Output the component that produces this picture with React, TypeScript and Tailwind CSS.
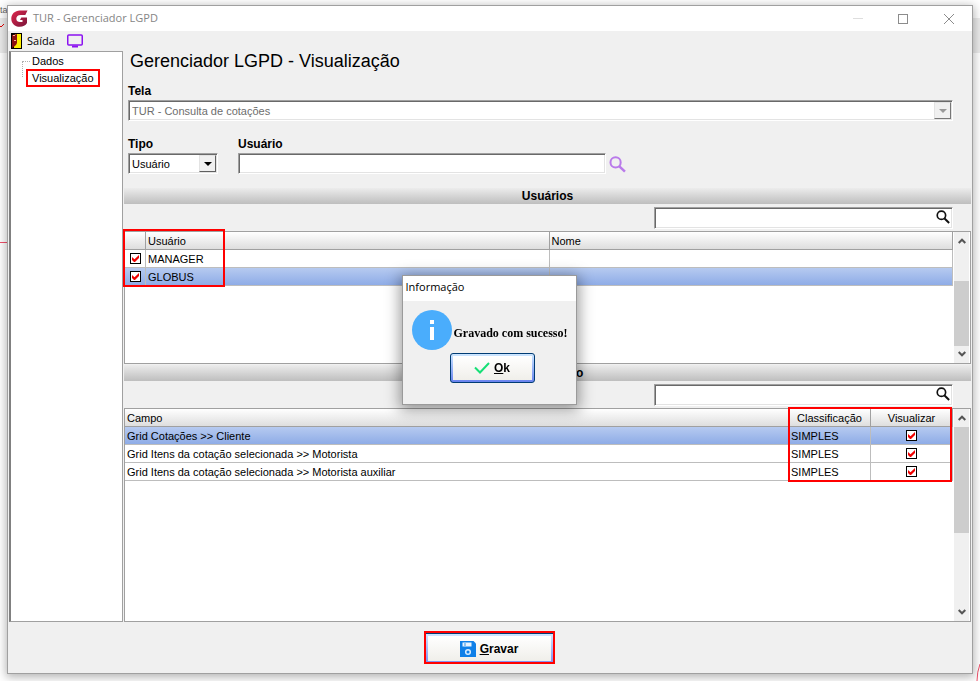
import { useState } from "react";
import type { ReactNode } from "react";

const sunken =
  "border border-t-[#a0a0a0] border-l-[#a0a0a0] border-b-white border-r-white bg-white shadow-[inset_1px_1px_0_#696969,inset_-1px_-1px_0_#e3e3e3]";

function RedCheck({ label }: { label: string }) {
  const [on, setOn] = useState(true);
  return (
    <span className="relative inline-grid size-[11px] align-middle">
      <input
        type="checkbox"
        aria-label={label}
        checked={on}
        onChange={() => setOn(!on)}
        className="col-start-1 row-start-1 size-[11px] appearance-none border border-black bg-white"
      />
      {on && (
        <svg viewBox="0 0 11 11" className="pointer-events-none col-start-1 row-start-1 size-[11px]">
          <path d="M2 4v3l2 2h1l4-4V2L4.500 6.200z" fill="#f00000" />
        </svg>
      )}
    </span>
  );
}

function Magnifier({ color, className }: { color: string; className: string }) {
  return (
    <svg viewBox="0 0 16 16" className={className} fill="none" stroke={color}>
      <circle cx="6.200" cy="6" r="4.800" strokeWidth="1.900" />
      <path d="M9.500 9.500l5.500 5.300" strokeWidth="2.300" />
    </svg>
  );
}

function Band({ children }: { children: ReactNode }) {
  return (
    <h2 className="h-4 bg-linear-to-b from-[#ececec] to-[#bebebe] text-center text-xs leading-4 font-bold">
      {children}
    </h2>
  );
}

function SearchBox({ label }: { label: string }) {
  return (
    <div className={`${sunken} mr-[18px] ml-auto flex h-[22px] w-[299px] items-center`}>
      <input aria-label={label} className="h-full min-w-0 flex-1 px-1 outline-none" />
      <button aria-label={`Pesquisar ${label}`} className="mr-[2px] mb-[2px]">
        <Magnifier color="#111" className="size-[14px]" />
      </button>
    </div>
  );
}

function ScrollBar({ children }: { children: ReactNode }) {
  return (
    <div className="ml-px flex w-[15px] shrink-0 flex-col bg-[#f0f0f0]">
      <button aria-label="Rolar para cima" className="grid h-[18px] place-items-center">
        <svg viewBox="0 0 8 6" className="w-2" fill="none" stroke="#555" strokeWidth="2">
          <path d="M.7 5L4 1.700L7.300 5" />
        </svg>
      </button>
      <div className="flex-1">{children}</div>
      <button aria-label="Rolar para baixo" className="grid h-[18px] place-items-center">
        <svg viewBox="0 0 8 6" className="w-2" fill="none" stroke="#555" strokeWidth="2">
          <path d="M.7 1L4 4.300L7.300 1" />
        </svg>
      </button>
    </div>
  );
}

const headRow = "h-[18px] bg-linear-to-b from-white to-[#dcdcdc]";
const headCell = "border-r border-b border-[#a0a0a0] p-0 px-[2px] leading-4 font-normal";
const cell = "h-[18px] border-r border-b border-[#bdbdbd] p-0 px-[2px] leading-4";
const checkCell = "h-[18px] border-r border-b border-[#bdbdbd] p-0 text-center leading-none";
const selectedRow = "bg-linear-to-b from-[#b6caf0] to-[#8caae6]";

const users = ["MANAGER", "GLOBUS"];
const fields = [
  "Grid Cotações >> Cliente",
  "Grid Itens da cotação selecionada >> Motorista",
  "Grid Itens da cotação selecionada >> Motorista auxiliar",
];

function TreePanel() {
  return (
    <nav className="w-[114px] shrink-0 border-t border-r border-b border-l-2 border-[#a0a0a0] border-l-[#808080] bg-white">
      <ul className="relative ml-[15px] leading-4">
        <li className="pt-px pl-[6px]">
          <a href="#dados">Dados</a>
        </li>
        <li className="flex">
          <a href="#visualizacao" className="border-2 border-[#f00] px-1 leading-[14px]">
            Visualização
          </a>
        </li>
        <li
          aria-hidden="true"
          className="absolute top-[9px] -left-1 h-4 w-2 border-t border-l border-dotted border-[#b0b0b0]"
        />
      </ul>
    </nav>
  );
}

function InfoDialog({ onClose }: { onClose: () => void }) {
  return (
    <div className="pointer-events-none fixed inset-0 grid place-items-center pr-[2px] pb-[2px]">
      <section
        role="dialog"
        aria-label="Informação"
        className="pointer-events-auto w-[175px] border border-[#9a9a9a] bg-[#f0f0f0] shadow-[0_3px_14px_2px_rgba(0,0,0,0.4)]"
      >
        <h3 className="bg-white pb-[3px] pl-[3px] font-['Open_Sans',sans-serif] text-[11px] leading-[22px]">
          Informação
        </h3>
        <div className="flex items-center pt-[9px] pl-[9px]">
          <svg viewBox="0 0 40 40" className="size-10 shrink-0">
            <circle cx="20" cy="20" r="20" fill="#4aadfc" />
            <path d="M18 10h4v4h-4zM18 17h4v13h-4z" fill="#fff" />
          </svg>
          <p className="pt-[6px] pl-[2px] font-['Liberation_Serif',serif] text-[12px] leading-4 font-bold whitespace-nowrap">
            Gravado com sucesso!
          </p>
        </div>
        <button
          onClick={onClose}
          className="mt-[3px] mb-[21px] ml-[47px] flex h-[30px] w-[85px] rounded-[3px] border border-[#003c74] bg-linear-to-b from-[#cee7ff] to-[#6982ee] p-[2px]"
        >
          <span className="flex h-full w-full items-center justify-center gap-1 bg-linear-to-b from-white to-[#f0efea] text-xs font-bold">
            <svg viewBox="0 0 16 12" className="w-4" fill="none" stroke="#16df76" strokeWidth="2">
              <path d="M1 5.500L6 10.500L15 1" />
            </svg>
            <span>
              <u>O</u>k
            </span>
          </span>
        </button>
      </section>
    </div>
  );
}

export default function App() {
  const [open, setOpen] = useState(true);
  return (
    <div className="relative isolate flex min-h-screen flex-col overflow-hidden bg-white px-[7px] pt-[5px] pb-[7px] font-['Liberation_Sans',Arial,sans-serif] text-[11px] text-black">
      <div aria-hidden="true" className="absolute inset-0 -z-10">
        <div className="absolute top-[18px] h-[35px] w-full bg-[#ebebeb]" />
        <span className="absolute top-[2px] left-0 text-[9px] leading-4 text-[#666]">ta</span>
        <svg viewBox="0 0 7 6" className="absolute top-[23px] left-0 w-[7px]" fill="none" stroke="#e00000">
          <path d="M0 3l1 1L4 1" />
        </svg>
        <div className="absolute top-[242px] left-0 h-px w-2 bg-[#f0506a]" />
        <svg viewBox="0 0 5 18" className="absolute right-0 bottom-0 w-[5px]" fill="none" stroke="#f0506a">
          <path d="M5 1Q2 9 2 18" />
        </svg>
      </div>

      <main className="flex flex-1 flex-col border border-[#a0a0a0] bg-[#f0f0f0] shadow-[0_2px_9px_1px_rgba(0,0,0,0.3)]">
        <header className="flex h-[25px] items-center bg-white pl-[3px]">
          <svg viewBox="0 0 17 17" className="size-[17px]">
            <defs>
              <linearGradient id="brand" x1="0" y1="0" x2="1" y2="1">
                <stop offset="0" stopColor="#e0264c" />
                <stop offset="1" stopColor="#78163a" />
              </linearGradient>
            </defs>
            <path
              d="M16.500 .5L14.300 5H9.500C7 5 5.300 6.500 5.300 8.700S7 12 9 12h2.500V10H9l1.300-2.500H16V13c-1.500 2.500-4 3.800-7.200 3.800C3.800 16.800.3 13.300.3 8.700S4 .5 8.800.5z"
              fill="url(#brand)"
            />
          </svg>
          <h1 className="flex-1 pl-[5px] font-['Open_Sans',sans-serif] text-[11px] text-[#858585]">
            TUR - Gerenciador LGPD
          </h1>
          <div className="flex items-center gap-[35px] pr-[17px] text-[#8c8c8c]">
            <button aria-label="Minimizar" className="h-px w-[10px] bg-[#dedede]" />
            <button aria-label="Maximizar" className="size-[10px] border border-current" />
            <button aria-label="Fechar">
              <svg viewBox="0 0 12 12" className="size-3" fill="none" stroke="currentColor">
                <path d="M1 1l10 10M11 1L1 11" />
              </svg>
            </button>
          </div>
        </header>

        <div className="flex h-5 items-center pl-[3px] font-['Open_Sans',sans-serif]">
          <button className="flex items-center gap-[5px]">
            <svg viewBox="0 0 11 16" className="h-4 w-[11px]">
              <path d="M0 0h11v16H0z" fill="#000" />
              <path d="M4 1h6v14H3z" fill="#fff000" />
              <path d="M1 2l5-1v9l-1 2-4 3z" fill="#8b1010" />
              <path d="M3 7h2v1H3zM2 2h2v1H2z" fill="#ffb0a0" />
            </svg>
            Saída
          </button>
          <button aria-label="Tela" className="ml-3">
            <svg viewBox="0 0 16 14" className="w-4" fill="none" stroke="#8b12f0" strokeWidth="1.500">
              <rect x=".75" y="1" width="14.500" height="10" rx="1" />
              <path d="M5 12.500h6" strokeWidth="2" />
            </svg>
          </button>
        </div>

        <div className="flex flex-1 pr-px pl-px">
          <TreePanel />
          <div className="ml-px flex min-w-0 flex-1 flex-col">
            <p className="pl-[6px] text-[18px] leading-5">Gerenciador LGPD - Visualização</p>
            <div className="mt-3 flex flex-col pr-[18px] pl-1">
              <label htmlFor="tela" className="text-xs leading-4 font-bold">
                Tela
              </label>
              <div className="relative mt-px">
                <select
                  id="tela"
                  disabled
                  className={`${sunken} h-[21px] w-full appearance-none px-[3px] leading-4 text-[#6d6d6d] opacity-100`}
                >
                  <option>TUR - Consulta de cotações</option>
                </select>
                <span className="pointer-events-none absolute top-[2px] right-[2px] grid h-[17px] w-[17px] place-items-center border border-t-[#e3e3e3] border-r-[#777] border-b-[#777] border-l-[#e3e3e3] bg-[#f0f0f0]">
                  <svg viewBox="0 0 8 4" className="w-2">
                    <path d="M0 0h8L4 4z" fill="#999" />
                  </svg>
                </span>
              </div>
            </div>

            <div className="mt-[15px] flex items-end pl-1">
              <div className="flex w-[90px] flex-col">
                <label htmlFor="tipo" className="text-xs leading-4 font-bold">
                  Tipo
                </label>
                <div className="relative mt-px">
                  <select id="tipo" className={`${sunken} h-[21px] w-full appearance-none px-[3px] leading-4`}>
                    <option>Usuário</option>
                  </select>
                  <span className="pointer-events-none absolute top-[2px] right-[2px] grid h-[17px] w-[17px] place-items-center border border-t-[#e3e3e3] border-r-[#606060] border-b-[#606060] border-l-[#e3e3e3] bg-[#f0f0f0]">
                    <svg viewBox="0 0 8 4" className="w-2">
                      <path d="M0 0h8L4 4z" fill="#000" />
                    </svg>
                  </span>
                </div>
              </div>
              <div className="ml-5 flex w-[368px] flex-col">
                <label htmlFor="usuario" className="text-xs leading-4 font-bold">
                  Usuário
                </label>
                <input id="usuario" className={`${sunken} mt-px h-[21px] px-1 outline-none`} />
              </div>
              <button aria-label="Pesquisar usuário" className="mb-px ml-[3px]">
                <Magnifier color="#b97aea" className="size-[17px]" />
              </button>
            </div>

            <div className="mt-[14px]">
              <Band>Usuários</Band>
            </div>
            <div className="mt-[3px]">
              <SearchBox label="usuários" />
            </div>
            <div className="relative mt-[2px] flex h-[133px] border border-[#a0a0a0] bg-white">
              <div className="min-w-0 flex-1">
                <table className="w-full table-fixed border-separate border-spacing-0 text-left">
                  <colgroup>
                    <col className="w-[21px]" />
                    <col />
                    <col />
                  </colgroup>
                  <thead>
                    <tr className={headRow}>
                      <th className={headCell} aria-label="Selecionado" />
                      <th className={headCell}>Usuário</th>
                      <th className={headCell}>Nome</th>
                    </tr>
                  </thead>
                  <tbody>
                    {users.map((user, i) => (
                      <tr key={user} className={i === 1 ? selectedRow : ""}>
                        <td className={checkCell}>
                          <RedCheck label={user} />
                        </td>
                        <td className={cell}>{user}</td>
                        <td className={cell} />
                      </tr>
                    ))}
                  </tbody>
                </table>
              </div>
              <ScrollBar>
                <div className="mt-[31px] h-[65px] bg-[#cdcdcd]" />
              </ScrollBar>
              <div className="w-px" />
              <div className="pointer-events-none absolute -top-[3px] -left-[2px] h-[58px] w-[102px] border-2 border-[#f00]" />
            </div>

            <div className="mt-px">
              <Band>Visualização</Band>
            </div>
            <div className="mt-[3px]">
              <SearchBox label="campos" />
            </div>
            <div className="relative mt-[2px] flex flex-1 border border-[#a0a0a0] bg-white">
              <div className="min-w-0 flex-1">
                <table className="w-full table-fixed border-separate border-spacing-0 text-left">
                  <colgroup>
                    <col />
                    <col className="w-[82px]" />
                    <col className="w-[82px]" />
                  </colgroup>
                  <thead>
                    <tr className={headRow}>
                      <th className={headCell}>Campo</th>
                      <th className={`${headCell} text-center`}>Classificação</th>
                      <th className={`${headCell} text-center`}>Visualizar</th>
                    </tr>
                  </thead>
                  <tbody>
                    {fields.map((field, i) => (
                      <tr key={field} className={i === 0 ? selectedRow : ""}>
                        <td className={cell}>{field}</td>
                        <td className={cell}>SIMPLES</td>
                        <td className={checkCell}>
                          <RedCheck label={field} />
                        </td>
                      </tr>
                    ))}
                  </tbody>
                </table>
              </div>
              <ScrollBar>
                <div className="h-[106px] bg-[#cdcdcd]" />
              </ScrollBar>
              <div className="w-px" />
              <div className="pointer-events-none absolute -top-[2px] right-[18px] h-[75px] w-[164px] border-2 border-[#f00]" />
            </div>
          </div>
        </div>

        <footer className="flex h-[51px] items-center justify-center pr-[2px]">
          <div className="border-2 border-[#f00]">
            <button className="flex h-[29px] w-[127px] border-t border-[#003c74] bg-linear-to-b from-[#cee7ff] to-[#8292f0] p-[2px] pb-px">
              <span className="flex h-full w-full items-center justify-center gap-1 bg-linear-to-b from-white to-[#f0efea] text-xs font-bold">
                <svg viewBox="0 0 16 16" className="size-4">
                  <path d="M0 0h13.500L16 2.500V16H0z" fill="#0f80e8" />
                  <path d="M2.500 1.500h9v4h-9z" fill="#e8f4ff" />
                  <path d="M4 1.500h2v4H4z" fill="#8cc4f5" />
                  <circle cx="8" cy="11" r="2.300" fill="none" stroke="#d8ecff" strokeWidth="1.500" />
                </svg>
                <span>
                  <u>G</u>ravar
                </span>
              </span>
            </button>
          </div>
        </footer>
      </main>
      {open && <InfoDialog onClose={() => setOpen(false)} />}
    </div>
  );
}
